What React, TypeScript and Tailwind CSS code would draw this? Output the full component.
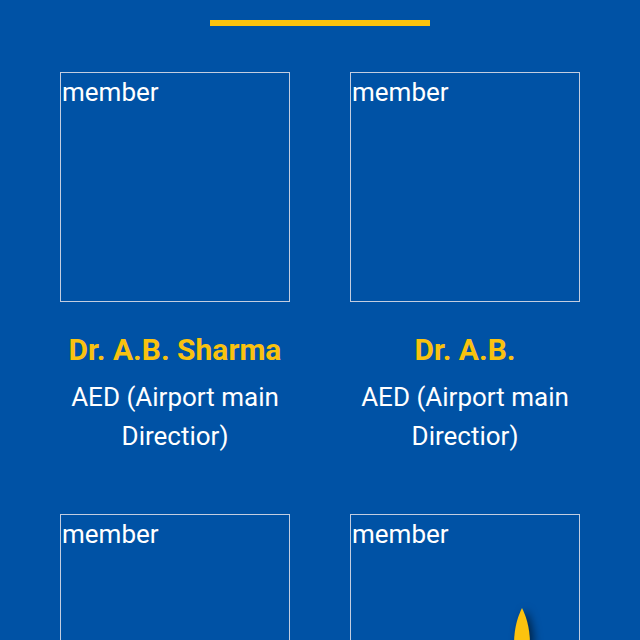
const members = [
  { name: 'Dr. A.B. Sharma', role: 'AED (Airport main Directior)' },
  { name: 'Dr. A.B.', role: 'AED (Airport main Directior)' },
  { name: 'Dr. A.B. Sharma', role: 'AED (Airport main Directior)' },
  { name: 'Dr. A.B.', role: 'AED (Airport main Directior)' },
]

const MemberCard = ({ name, role }: { name: string; role: string }) => {
  return (
    <div className="flex flex-col items-center text-center">
      <div className="h-[230px] w-[230px] self-start border border-[#c3cde0] pl-[1px] text-left text-[26px] leading-[38px] text-white">
        member
      </div>
      <h3 className="mt-[30px] text-[30px] font-bold leading-[36px] text-[#f9c20f]">
        {name}
      </h3>
      <p className="mt-[10px] w-[230px] text-[26px] leading-[39px] text-white">
        {role}
      </p>
    </div>
  )
}

export default function App() {
  return (
    <div
      className="relative min-h-screen bg-[#0052a5] pt-[20px]"
      style={{ fontFamily: 'Roboto, "Liberation Sans", sans-serif' }}
    >
      <div className="mx-auto h-[6px] w-[220px] bg-[#fcc30e]" />
      <div className="mt-[46px] grid grid-cols-[230px_230px] gap-x-[60px] gap-y-[58px] px-[60px]">
        {members.map((m, i) => (
          <MemberCard key={i} name={m.name} role={m.role} />
        ))}
      </div>
      <div className="fixed left-[508px] top-[604px] h-[40px] w-[28px]">
        <svg
          width="28"
          height="40"
          viewBox="0 0 28 40"
          style={{ filter: 'drop-shadow(4px 2px 4px rgba(0,0,0,0.55))' }}
        >
          <path
            d="M14 4 C17 10 22 22 22 40 L6 40 C6 22 11 10 14 4 Z"
            fill="#fcc30e"
          />
        </svg>
      </div>
    </div>
  )
}
